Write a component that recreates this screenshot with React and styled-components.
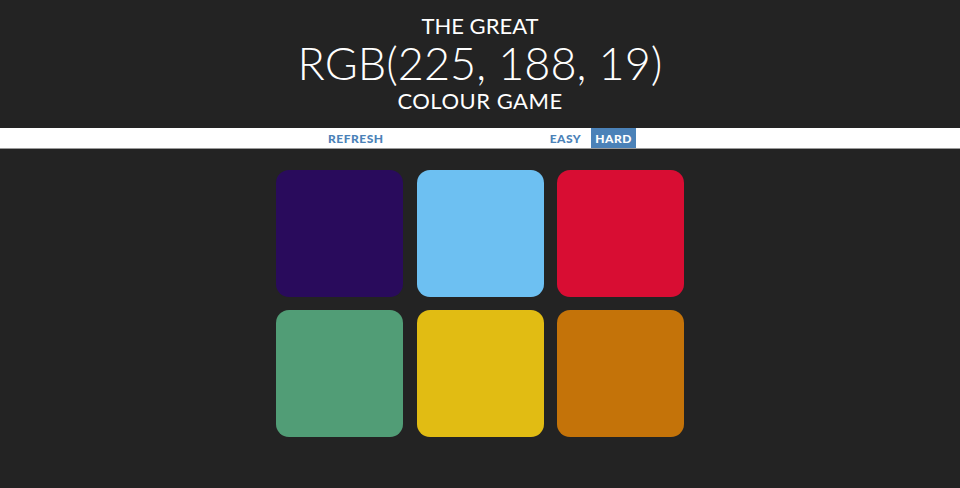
import React from "react";
import styled, { createGlobalStyle } from "styled-components";

const GlobalStyle = createGlobalStyle`
  html, body {
    margin: 0;
    padding: 0;
    background: #232323;
  }
  body {
    font-family: Lato, "Open Sans", sans-serif;
  }
`;

const Page = styled.div`
  width: 960px;
  height: 488px;
  background: #232323;
  overflow: hidden;
`;

const Header = styled.h1`
  margin: 0;
  padding: 13px 0 0;
  height: 128px;
  box-sizing: border-box;
  color: #ffffff;
  font-weight: 400;
  text-align: center;
  text-transform: uppercase;
  display: flex;
  flex-direction: column;
  align-items: center;
`;

const SmallLine = styled.span`
  font-size: 22px;
  line-height: 26px;
  font-weight: 400;
  letter-spacing: ${(p) => (p.$wide ? "0.5px" : "0")};
`;

const BigLine = styled.span`
  font-size: 45px;
  line-height: 49px;
  font-weight: 300;
`;

const Stripe = styled.div`
  height: 20px;
  background: #ffffff;
  border-bottom: 1px solid #9a9a9a;
  display: flex;
  justify-content: center;
  align-items: stretch;
`;

const StripeButton = styled.button`
  border: none;
  background: ${(p) => (p.$selected ? "#4b82b8" : "transparent")};
  color: ${(p) => (p.$selected ? "#ffffff" : "#4b82b8")};
  font-family: Lato, "Open Sans", sans-serif;
  font-weight: 900;
  font-size: 12px;
  letter-spacing: 0.5px;
  text-transform: uppercase;
  padding: 0 4px;
  margin: 0;
  height: 100%;
  cursor: pointer;
`;

const Message = styled.span`
  width: 158px;
`;

const ModeGroup = styled.div`
  display: flex;
  gap: 6px;
`;

const Board = styled.div`
  width: 408px;
  margin: 21px auto 0;
  display: grid;
  grid-template-columns: repeat(3, 127px);
  column-gap: 13.5px;
  row-gap: 13px;
`;

const Square = styled.div`
  width: 127px;
  height: 127px;
  border-radius: 13px;
  background: ${(p) => p.$color};
`;

const colours = [
  "rgb(41, 11, 92)",
  "rgb(109, 192, 242)",
  "rgb(216, 13, 51)",
  "rgb(81, 157, 118)",
  "rgb(225, 188, 19)",
  "rgb(196, 115, 9)",
];

export default function App() {
  return (
    <Page>
      <GlobalStyle />
      <Header>
        <SmallLine>The Great</SmallLine>
        <BigLine>RGB(225, 188, 19)</BigLine>
        <SmallLine $wide>Colour Game</SmallLine>
      </Header>
      <Stripe>
        <StripeButton>Refresh</StripeButton>
        <Message />
        <ModeGroup>
          <StripeButton>Easy</StripeButton>
          <StripeButton $selected>Hard</StripeButton>
        </ModeGroup>
      </Stripe>
      <Board>
        {colours.map((c) => (
          <Square key={c} $color={c} />
        ))}
      </Board>
    </Page>
  );
}
